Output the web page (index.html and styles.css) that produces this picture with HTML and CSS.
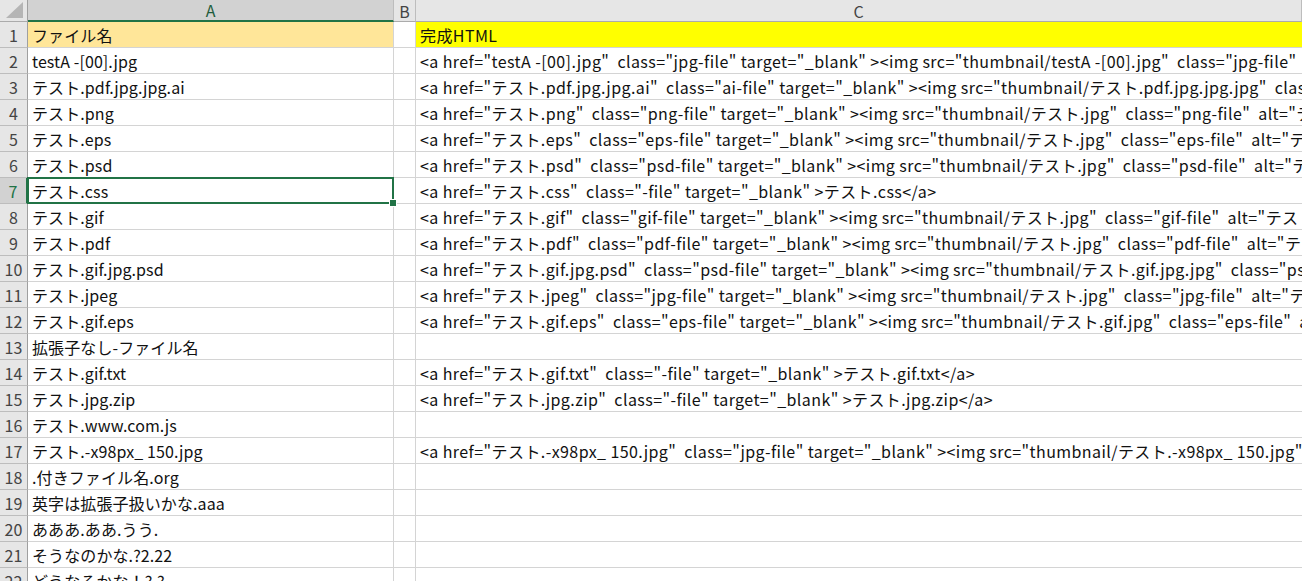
FILE: index.html
```html
<!DOCTYPE html>
<html lang="ja">
<head>
<meta charset="utf-8">
<title>Sheet</title>
<link rel="stylesheet" href="styles.css">
</head>
<body>
<div class="sheet">
  <div class="corner"><svg class="tri" width="18" height="16" viewBox="0 0 18 16"><polygon points="17,0 17,16 0,16" fill="#b5b5b5"/></svg></div>
  <div class="colhead sel">A</div>
  <div class="colhead">B</div>
  <div class="colhead">C</div>

  <div class="rowhead">1</div><div class="cell a hdr-a">ファイル名</div><div class="cell b"></div><div class="cell c hdr-c">完成HTML</div>
  <div class="rowhead">2</div><div class="cell a">testA -[00].jpg</div><div class="cell b"></div><div class="cell c">&lt;a href="testA -[00].jpg"  class="jpg-file" target="_blank" &gt;&lt;img src="thumbnail/testA -[00].jpg"  class="jpg-file"  alt="testA -[00].jpg"&gt;&lt;/a&gt;</div>
  <div class="rowhead">3</div><div class="cell a">テスト.pdf.jpg.jpg.ai</div><div class="cell b"></div><div class="cell c">&lt;a href="テスト.pdf.jpg.jpg.ai"  class="ai-file" target="_blank" &gt;&lt;img src="thumbnail/テスト.pdf.jpg.jpg.jpg"  class="ai-file"  alt="テスト.pdf.jpg.jpg.ai"&gt;&lt;/a&gt;</div>
  <div class="rowhead">4</div><div class="cell a">テスト.png</div><div class="cell b"></div><div class="cell c">&lt;a href="テスト.png"  class="png-file" target="_blank" &gt;&lt;img src="thumbnail/テスト.jpg"  class="png-file"  alt="テスト.png"&gt;&lt;/a&gt;</div>
  <div class="rowhead">5</div><div class="cell a">テスト.eps</div><div class="cell b"></div><div class="cell c">&lt;a href="テスト.eps"  class="eps-file" target="_blank" &gt;&lt;img src="thumbnail/テスト.jpg"  class="eps-file"  alt="テスト.eps"&gt;&lt;/a&gt;</div>
  <div class="rowhead">6</div><div class="cell a">テスト.psd</div><div class="cell b"></div><div class="cell c">&lt;a href="テスト.psd"  class="psd-file" target="_blank" &gt;&lt;img src="thumbnail/テスト.jpg"  class="psd-file"  alt="テスト.psd"&gt;&lt;/a&gt;</div>
  <div class="rowhead selrow">7</div><div class="cell a active">テスト.css<span class="selbox"><span class="handle"></span></span></div><div class="cell b"></div><div class="cell c">&lt;a href="テスト.css"  class="-file" target="_blank" &gt;テスト.css&lt;/a&gt;</div>
  <div class="rowhead">8</div><div class="cell a">テスト.gif</div><div class="cell b"></div><div class="cell c">&lt;a href="テスト.gif"  class="gif-file" target="_blank" &gt;&lt;img src="thumbnail/テスト.jpg"  class="gif-file"  alt="テスト.gif"&gt;&lt;/a&gt;</div>
  <div class="rowhead">9</div><div class="cell a">テスト.pdf</div><div class="cell b"></div><div class="cell c">&lt;a href="テスト.pdf"  class="pdf-file" target="_blank" &gt;&lt;img src="thumbnail/テスト.jpg"  class="pdf-file"  alt="テスト.pdf"&gt;&lt;/a&gt;</div>
  <div class="rowhead">10</div><div class="cell a">テスト.gif.jpg.psd</div><div class="cell b"></div><div class="cell c">&lt;a href="テスト.gif.jpg.psd"  class="psd-file" target="_blank" &gt;&lt;img src="thumbnail/テスト.gif.jpg.jpg"  class="psd-file"  alt="テスト.gif.jpg.psd"&gt;&lt;/a&gt;</div>
  <div class="rowhead">11</div><div class="cell a">テスト.jpeg</div><div class="cell b"></div><div class="cell c">&lt;a href="テスト.jpeg"  class="jpg-file" target="_blank" &gt;&lt;img src="thumbnail/テスト.jpg"  class="jpg-file"  alt="テスト.jpeg"&gt;&lt;/a&gt;</div>
  <div class="rowhead">12</div><div class="cell a">テスト.gif.eps</div><div class="cell b"></div><div class="cell c">&lt;a href="テスト.gif.eps"  class="eps-file" target="_blank" &gt;&lt;img src="thumbnail/テスト.gif.jpg"  class="eps-file"  alt="テスト.gif.eps"&gt;&lt;/a&gt;</div>
  <div class="rowhead">13</div><div class="cell a">拡張子なし-ファイル名</div><div class="cell b"></div><div class="cell c"></div>
  <div class="rowhead">14</div><div class="cell a">テスト.gif.txt</div><div class="cell b"></div><div class="cell c">&lt;a href="テスト.gif.txt"  class="-file" target="_blank" &gt;テスト.gif.txt&lt;/a&gt;</div>
  <div class="rowhead">15</div><div class="cell a">テスト.jpg.zip</div><div class="cell b"></div><div class="cell c">&lt;a href="テスト.jpg.zip"  class="-file" target="_blank" &gt;テスト.jpg.zip&lt;/a&gt;</div>
  <div class="rowhead">16</div><div class="cell a">テスト.www.com.js</div><div class="cell b"></div><div class="cell c"></div>
  <div class="rowhead">17</div><div class="cell a">テスト.-x98px_ 150.jpg</div><div class="cell b"></div><div class="cell c">&lt;a href="テスト.-x98px_ 150.jpg"  class="jpg-file" target="_blank" &gt;&lt;img src="thumbnail/テスト.-x98px_ 150.jpg"  class="jpg-file"  alt="テスト.-x98px_ 150.jpg"&gt;&lt;/a&gt;</div>
  <div class="rowhead">18</div><div class="cell a">.付きファイル名.org</div><div class="cell b"></div><div class="cell c"></div>
  <div class="rowhead">19</div><div class="cell a">英字は拡張子扱いかな.aaa</div><div class="cell b"></div><div class="cell c"></div>
  <div class="rowhead">20</div><div class="cell a">あああ.ああ.うう.</div><div class="cell b"></div><div class="cell c"></div>
  <div class="rowhead">21</div><div class="cell a">そうなのかな.?2.22</div><div class="cell b"></div><div class="cell c"></div>
  <div class="rowhead">22</div><div class="cell a">どうなるかな！?.?</div><div class="cell b"></div><div class="cell c"></div>
</div>
</body>
</html>
```

FILE: styles.css
```css
html, body {
  margin: 0;
  padding: 0;
  background: #ffffff;
  overflow: hidden;
}
body {
  width: 1302px;
  height: 581px;
  font-family: "Noto Sans CJK JP", "Noto Sans", sans-serif;
  font-size: 16px;
  color: #111111;
}
.sheet {
  display: grid;
  grid-template-columns: 28px 366px 22px minmax(0, 1fr);
  grid-template-rows: 22px repeat(22, 26px);
  width: 1302px;
}
.corner {
  background: #e6e6e6;
  border-right: 1px solid #9f9f9f;
  border-bottom: 1px solid #ababab;
  box-sizing: border-box;
  position: relative;
}
.tri {
  position: absolute;
  right: 3px;
  bottom: 3px;
}
.colhead {
  background: #e6e6e6;
  border-right: 1px solid #bdbdbd;
  border-bottom: 1px solid #ababab;
  box-sizing: border-box;
  display: flex;
  align-items: center;
  justify-content: center;
  color: #444444;
  font-size: 16px;
  line-height: 1;
}
.colhead.sel {
  background: #d2d2d2;
  color: #1e5c3c;
  border-bottom: 2px solid #217346;
}
.rowhead {
  background: #e6e6e6;
  border-right: 1px solid #9f9f9f;
  border-bottom: 1px solid #bdbdbd;
  box-sizing: border-box;
  display: flex;
  align-items: center;
  justify-content: center;
  color: #444444;
  font-size: 16px;
}
.rowhead.selrow {
  background: #d2d2d2;
  color: #217346;
  border-right: 2px solid #217346;
}
.cell {
  border-right: 1px solid #d4d4d4;
  border-bottom: 1px solid #d4d4d4;
  box-sizing: border-box;
  display: flex;
  align-items: center;
  white-space: pre;
  overflow: hidden;
  padding-left: 4px;
  line-height: 1;
}
.cell.a {
  letter-spacing: 0.1px;
}
.cell.c {
  padding-left: 4px;
  border-right: none;
  letter-spacing: 0.42px;
}
.hdr-a {
  background: #ffe699;
}
.hdr-c {
  background: #ffff00;
}
.active {
  position: relative;
  overflow: visible;
}
.selbox {
  position: absolute;
  left: -1px;
  top: -1px;
  right: -1px;
  bottom: -1px;
  border: 2px solid #217346;
  pointer-events: none;
}
.handle {
  position: absolute;
  right: -5px;
  bottom: -5px;
  width: 6px;
  height: 6px;
  background: #217346;
  border: 1px solid #ffffff;
}
```
